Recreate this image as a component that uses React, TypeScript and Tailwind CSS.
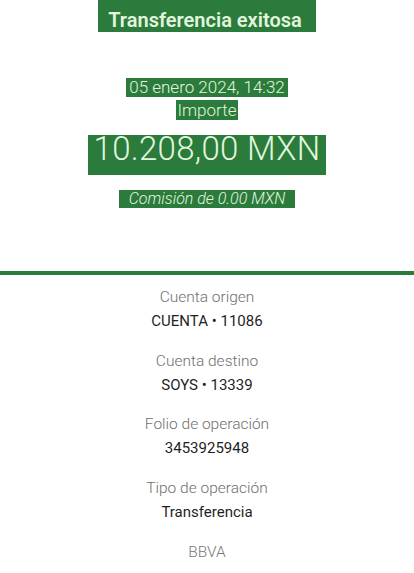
import React from 'react';

const rows = [
  { label: 'Cuenta origen', value: 'CUENTA • 11086' },
  { label: 'Cuenta destino', value: 'SOYS • 13339' },
  { label: 'Folio de operación', value: '3453925948' },
  { label: 'Tipo de operación', value: 'Transferencia' },
];

export default function App() {
  return (
    <div className="w-[414px] h-[573px] bg-white overflow-hidden font-['Roboto',sans-serif]">
      {/* Header */}
      <div className="h-[271px] flex flex-col items-center text-[#e2f6de]">
        <h1 className="h-[32px] pl-[10px] pr-[14px] pt-[9px] bg-[#2a7b3c] text-[20px] font-semibold leading-[22px]">
          Transferencia exitosa
        </h1>
        <p className="mt-[46px] px-[3px] bg-[#2a7b3c] text-[17px] font-light leading-[19px]">
          05 enero 2024, 14:32
        </p>
        <p className="mt-[3px] px-[2px] bg-[#2a7b3c] text-[17px] font-light leading-[20px]">Importe</p>
        <p className="mt-[15px] h-[40px] px-[6px] bg-[#2a7b3c] text-[33px] font-light leading-[28px] tracking-[0.3px]">
          10.208,00 MXN
        </p>
        <p className="mt-[15px] px-[10px] bg-[#2a7b3c] text-[16px] font-light italic leading-[18px]">
          Comisión de 0.00 MXN
        </p>
      </div>
      <div className="h-[4px] bg-[#2a7b3c]" />

      {/* Details */}
      <div className="flex flex-col items-center pt-[12px]">
        {rows.map((r) => (
          <div key={r.label} className="flex flex-col items-center h-[63.5px]">
            <span className="text-[15.5px] font-light text-[#6f6f6f] leading-[20px]">{r.label}</span>
            <span className="mt-[4px] text-[15px] text-[#1f1f1f] leading-[20px]">{r.value}</span>
          </div>
        ))}
        <span className="mt-[1px] text-[15.5px] font-light text-[#7a7a7a] leading-[20px]">BBVA</span>
      </div>
    </div>
  );
}
